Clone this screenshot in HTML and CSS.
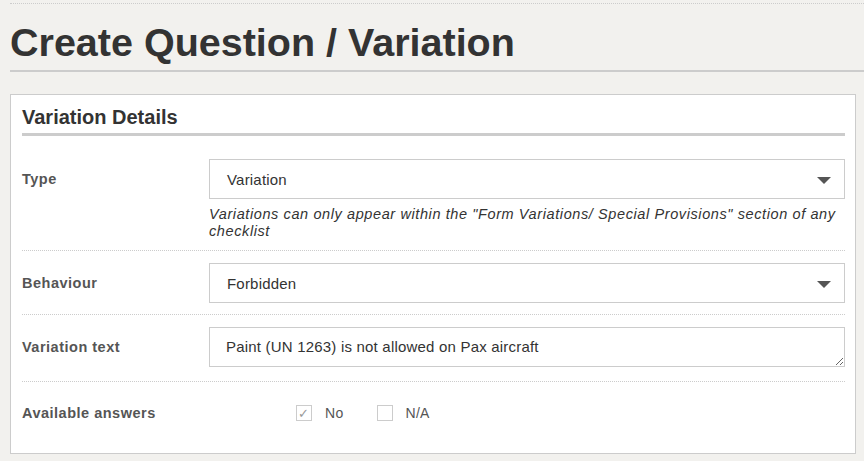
FILE: index.html
```html
<!DOCTYPE html>
<html lang="en">
<head>
    <meta charset="UTF-8">
    <meta name="viewport" content="width=device-width, initial-scale=1.0">
    <title>Create Question / Variation</title>
    <link rel="stylesheet" href="styles.css">
</head>
<body>

    <div class="page-header">
        <h1>Create Question / Variation</h1>
    </div>

    <div class="panel">
        <h2>Variation Details</h2>

        <div class="form-row">
            <label for="type">Type</label>
            <div class="field">
                <div class="select-box" id="type">
                    <span>Variation</span>
                    <span class="caret"></span>
                </div>
                <p class="hint">Variations can only appear within the "Form Variations/ Special Provisions" section of any checklist</p>
            </div>
        </div>

        <div class="form-row">
            <label for="behaviour">Behaviour</label>
            <div class="field">
                <div class="select-box" id="behaviour">
                    <span>Forbidden</span>
                    <span class="caret"></span>
                </div>
            </div>
        </div>

        <div class="form-row">
            <label for="text">Variation text</label>
            <div class="field">
                <textarea id="text" rows="1">Paint (UN 1263) is not allowed on Pax aircraft</textarea>
            </div>
        </div>

        <div class="form-row answers">
            <label>Available answers</label>
            <div class="field checks">
                <span class="check"><span class="box checked">&#10003;</span>No</span>
                <span class="check"><span class="box"></span>N/A</span>
            </div>
        </div>
    </div>

</body>
</html>
```

FILE: styles.css
```css
body {
    margin: 0;
    background-color: #f2f1ee;
    font-family: "Liberation Sans", Arial, sans-serif;
    color: #333;
}
.page-header {
    margin: 3px 0 0 10px;
    border-top: 1px dotted #ccc;
}
.page-header h1 {
    margin: 0;
    padding: 16px 0 6px 0;
    font-size: 39.5px;
    line-height: 44px;
    font-weight: bold;
    color: #333;
    border-bottom: 2px solid #ccc;
}
.panel {
    margin: 22px 8px 0 10px;
    padding: 0 10px 0 11px;
    background-color: #fff;
    border: 1px solid #ccc;
    height: 358px;
}
.panel h2 {
    margin: 0;
    padding: 10px 0 4px 0;
    font-size: 20px;
    line-height: 24px;
    color: #333;
    border-bottom: 3px solid #ccc;
}
.form-row {
    display: grid;
    grid-template-columns: 187px 1fr;
    padding: 12px 0 11px 0;
    border-bottom: 1px dotted #ccc;
}
.form-row:nth-of-type(1) {
    padding-top: 23px;
    padding-bottom: 10px;
}
.form-row label {
    font-weight: bold;
    font-size: 14.5px;
    letter-spacing: 0.5px;
    line-height: 40px;
    color: #555;
}
.select-box {
    height: 38px;
    border: 1px solid #ccc;
    display: flex;
    align-items: center;
    justify-content: space-between;
    padding: 0 13px 0 17px;
    font-size: 15px;
    letter-spacing: 0.2px;
    color: #333;
}
.caret {
    width: 0;
    height: 0;
    border-left: 7px solid transparent;
    border-right: 7px solid transparent;
    border-top: 7px solid #555;
    margin-top: 2px;
}
.hint {
    margin: 7px 0 0 0;
    font-size: 14.5px;
    letter-spacing: 0.6px;
    line-height: 17px;
    font-style: italic;
    color: #333;
}
textarea {
    display: block;
    width: 100%;
    height: 40px;
    box-sizing: border-box;
    border: 1px solid #ccc;
    padding: 10px 16px;
    font-family: "Liberation Sans", Arial, sans-serif;
    font-size: 15px;
    letter-spacing: 0.2px;
    line-height: 18px;
    color: #333;
    margin-bottom: 3px;
}
.form-row.answers {
    border-bottom: none;
    padding-top: 11px;
}
.checks {
    display: flex;
    align-items: center;
    padding-left: 87px;
    font-size: 14px;
    letter-spacing: 0.3px;
    color: #555;
}
.check {
    display: flex;
    align-items: center;
    margin-right: 33px;
}
.box {
    width: 16px;
    height: 16px;
    box-sizing: border-box;
    border: 1px solid #ccc;
    margin-right: 13px;
    font-size: 13px;
    line-height: 16px;
    text-align: center;
    color: #999;
}
```
